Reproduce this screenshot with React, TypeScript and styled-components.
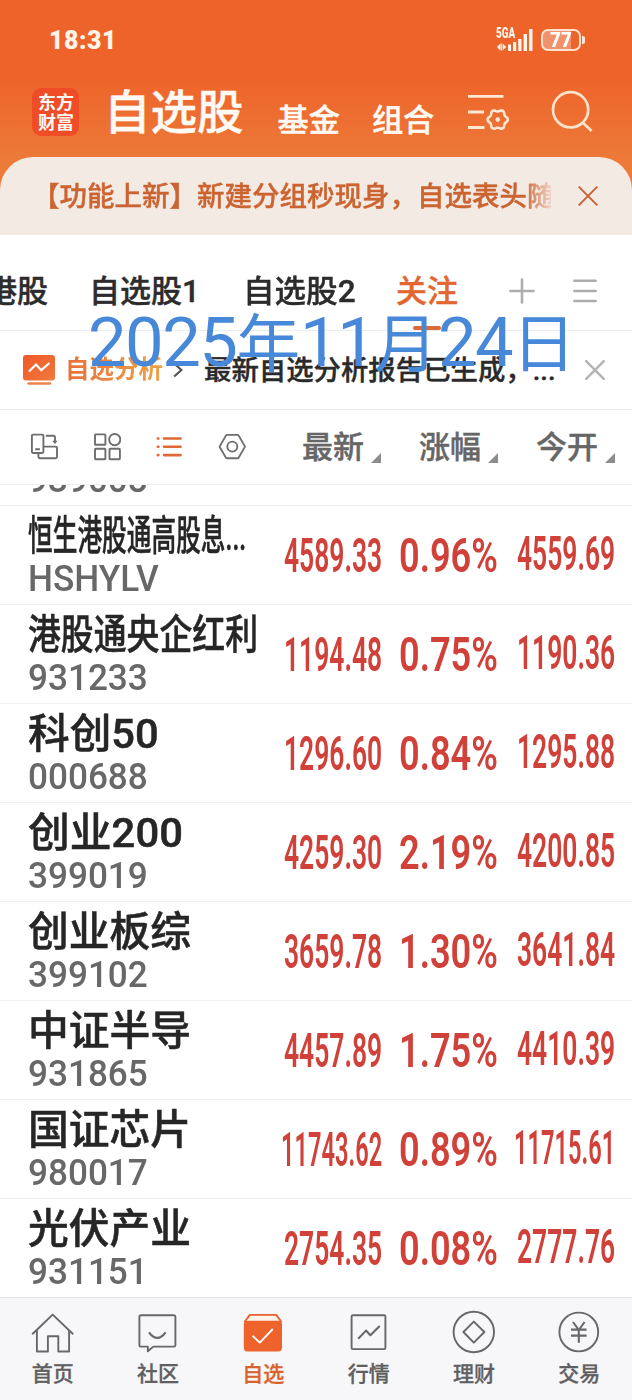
import React, { useLayoutEffect, useRef, useState } from "react";
import styled, { createGlobalStyle, css } from "styled-components";

const GlobalStyle = createGlobalStyle`
  *, *::before, *::after { box-sizing: border-box; }
  body {
    margin: 0;
    background: #fff;
    font-family: Roboto, "Noto Sans CJK SC", sans-serif;
    color: #2a2a2a;
  }
  svg { display: block; flex: none; }
`;

/* ---------- text that is squeezed or stretched to a fixed width ---------- */

const FitBox = styled.span<{ $width: number }>`
  display: block;
  flex: none;
  width: ${(p) => p.$width}px;
  white-space: nowrap;
`;
const FitInner = styled.span`
  display: inline-block;
  transform-origin: 0 50%;
`;

function Fit({ width, children }: { width: number; children: React.ReactNode }) {
  const ref = useRef<HTMLSpanElement>(null);
  const [scale, setScale] = useState(1);
  useLayoutEffect(() => {
    if (ref.current && ref.current.offsetWidth) setScale(width / ref.current.offsetWidth);
  }, [width, children]);
  return (
    <FitBox $width={width}>
      <FitInner ref={ref} style={{ transform: `scaleX(${scale})` }}>
        {children}
      </FitInner>
    </FitBox>
  );
}

/* semi-bold look for the CJK glyphs, which come only in medium and bold */
const semibold = css`
  font-weight: 500;
  -webkit-text-stroke: 0.4px currentColor;
`;

/* ---------- page ---------- */

const Screen = styled.main`
  position: relative;
  display: flex;
  flex-direction: column;
  width: 632px;
  height: 1400px;
  overflow: hidden;
  background: #fff;
`;

const Hero = styled.header`
  height: 235px;
  flex: none;
  display: flex;
  flex-direction: column;
  background: linear-gradient(#ee632a 0, #ee632a 76px, #ec7a38 160px, #ec7a38 100%);
`;

const StatusBar = styled.div`
  height: 78px;
  display: flex;
  align-items: center;
  justify-content: space-between;
  padding: 2px 46px 0 49px;
  color: #fff4ea;
`;
const Clock = styled.div`
  font-size: 25px;
  font-weight: 900;
  letter-spacing: 0.5px;
`;
const StatusIcons = styled.div`
  display: flex;
  align-items: center;
  gap: 8px;
`;
const Network = styled.div`
  position: relative;
  width: 37px;
  height: 24px;
`;
const NetworkLabel = styled.span`
  position: absolute;
  left: 0;
  top: -1px;
  font-size: 14px;
  line-height: 13px;
  font-weight: 900;
`;
const Battery = styled.div`
  position: relative;
  width: 40px;
  height: 22px;
  border: 2px solid #ffe3d0;
  border-radius: 7px;
  background: linear-gradient(90deg, #f1926c 0 28px, transparent 28px);
  color: #fff;
  font-size: 20.5px;
  line-height: 19px;
  font-weight: 900;
  padding-left: 7px;
  margin-right: 5px;
  &::after {
    content: "";
    position: absolute;
    right: -6px;
    top: 5px;
    width: 3px;
    height: 8px;
    border-radius: 0 2px 2px 0;
    background: #ffe3d0;
  }
`;

const TitleBar = styled.div`
  height: 79px;
  flex: none;
  display: flex;
  align-items: flex-start;
  padding-left: 32px;
  color: #fffaf4;
`;
const Logo = styled.div`
  width: 47px;
  height: 48px;
  margin: 10px 25px 0 0;
  padding: 5px 0 0 6px;
  border-radius: 9px;
  background: #ee4d28;
  font-size: 18px;
  line-height: 19.5px;
  font-weight: 700;
`;
const Title = styled.div`
  margin: 6.5px 34px 0 0;
  font-size: 46.5px;
  line-height: 56px;
  ${semibold}
`;
const TitleLink = styled.div`
  margin: 22.5px 32px 0 0;
  font-size: 31.2px;
  line-height: 40px;
  ${semibold}
`;
const TitleIcon = styled.div<{ $left?: number; $top: number }>`
  margin: ${(p) => p.$top}px 0 0 ${(p) => p.$left ?? 0}px;
`;

const Notice = styled.div`
  height: 78px;
  flex: none;
  display: flex;
  align-items: center;
  padding: 0 34px 0 32px;
  border-radius: 33px 33px 0 0;
  background: #f4eae4;
  color: #cb6431;
`;
const NoticeText = styled.div`
  width: 519px;
  padding-top: 2px;
  overflow: hidden;
  white-space: nowrap;
  font-size: 27.5px;
  line-height: 40px;
  ${semibold}
  mask-image: linear-gradient(90deg, #000 492px, transparent 524px);
`;
const NoticeClose = styled.div`
  margin-left: auto;
`;

/* ---------- tabs ---------- */

const Tabs = styled.nav`
  height: 96px;
  flex: none;
  display: flex;
  align-items: center;
  padding-top: 17px;
  border-bottom: 1px solid #ececec;
  overflow: hidden;
`;
const Tab = styled.div<{ $gap: number; $active?: boolean }>`
  position: relative;
  flex: none;
  margin-right: ${(p) => p.$gap}px;
  padding-top: 2px;
  font-size: 31px;
  line-height: 76px;
  ${semibold}
  color: ${(p) => (p.$active ? "#e2662f" : "#2c2c2c")};
  &:first-child { margin-left: -14px; }
  ${(p) =>
    p.$active &&
    css`
      &::after {
        content: "";
        position: absolute;
        left: 17px;
        bottom: 0;
        width: 28px;
        height: 4px;
        border-radius: 2px;
        background: #dc6a38;
      }
    `}
`;

/* ---------- report line ---------- */

const Report = styled.section`
  height: 79px;
  flex: none;
  display: flex;
  align-items: center;
  padding-left: 23px;
  border-bottom: 1px solid #e9e9e9;
`;
const ReportTitle = styled.div`
  margin: 0 10px 0 10px;
  font-size: 24.5px;
  line-height: 36px;
  font-weight: 700;
  background: linear-gradient(90deg, #e8703a, #f0a044);
  background-clip: text;
  color: transparent;
`;
const ReportText = styled.div`
  width: 381px;
  margin-left: 21px;
  padding-top: 2px;
  font-size: 27.4px;
  line-height: 40px;
  ${semibold}
  white-space: nowrap;
`;

const Watermark = styled.div`
  position: absolute;
  z-index: 2;
  left: 88px;
  top: 303px;
  color: #4788d9;
  font-size: 68px;
  line-height: 80px;
  font-weight: 400;
  letter-spacing: -1.5px;
`;
const WatermarkUnit = styled.span`
  font-size: 63px;
  letter-spacing: 0;
  line-height: 1;
`;

/* ---------- quotes ---------- */

const ColumnBar = styled.div`
  height: 75px;
  flex: none;
  display: flex;
  align-items: center;
  padding-left: 30px;
  border-bottom: 1px solid #efefef;
`;
const Tools = styled.div`
  flex: none;
  display: flex;
  gap: 34.5px;
  width: 272px;
`;
const Column = styled.div`
  position: relative;
  flex: none;
  width: 117px;
  padding-top: 2px;
  font-size: 31px;
  line-height: 40px;
  ${semibold}
  color: #666;
  &:last-child { width: 85px; }
  &::after {
    content: "";
    position: absolute;
    left: 69px;
    top: 27px;
    border-style: solid;
    border-width: 0 0 10px 10px;
    border-color: transparent transparent #8c8c8c transparent;
  }
`;

const QuoteList = styled.div`
  flex: 1;
  min-height: 0;
  overflow: hidden;
  display: flex;
  flex-direction: column;
  justify-content: flex-end;
`;
const Row = styled.div`
  height: 99px;
  flex: none;
  display: flex;
  padding: 7px 0 0 28px;
  border-bottom: 1px solid #f0f0f0;
  &:last-child { height: 98px; border-bottom: 0; }
`;
const Identity = styled.div`
  width: 233px;
`;
const Name = styled.div`
  font-size: 41px;
  line-height: 46px;
  font-weight: 500;
  -webkit-text-stroke: 0.5px currentColor;
  color: #262626;
`;
const Code = styled.div`
  margin-top: 2px;
  font-size: 36px;
  line-height: 36px;
  font-weight: 500;
  color: #686868;
`;
const Value = styled.div<{ $width: number; $raised?: boolean }>`
  width: ${(p) => p.$width}px;
  display: flex;
  justify-content: flex-end;
  padding-top: ${(p) => (p.$raised ? 13 : 15)}px;
  font-size: 47.5px;
  line-height: 56px;
  font-weight: 600;
  color: #d0413a;
`;

/* ---------- bottom navigation ---------- */

const BottomNav = styled.nav`
  height: 103px;
  flex: none;
  display: grid;
  grid-template-columns: repeat(6, 1fr);
  border-top: 1px solid #e2e2e4;
  background: #f7f7fa;
`;
const NavItem = styled.div<{ $active?: boolean }>`
  display: flex;
  flex-direction: column;
  align-items: center;
  gap: 6px;
  padding-top: 12px;
  font-size: 21px;
  line-height: 28px;
  font-weight: 500;
  -webkit-text-stroke: 0.3px currentColor;
  color: ${(p) => (p.$active ? "#d8632f" : "#606060")};
`;

/* ---------- icons ---------- */

const Cross = ({ size, color, w }: { size: number; color: string; w: number }) => (
  <svg width={size} height={size} viewBox="0 0 20 20" fill="none" stroke={color} strokeWidth={w} strokeLinecap="round">
    <path d="M1.2 1.2 18.8 18.8M18.8 1.2 1.2 18.8" />
  </svg>
);

const SignalIcon = () => (
  <svg width="37" height="24" viewBox="0 0 37 24" fill="currentColor">
    <path d="M1 19 4 15.8V22.2zM4.4 15.5h1.4v7H4.4zM6.6 15.5 10.2 19 6.6 22.5z" />
    <rect x="12" y="16.5" width="3" height="6.5" />
    <rect x="17" y="14" width="3.2" height="9" />
    <rect x="22.2" y="11" width="3.3" height="12" />
    <rect x="27.6" y="6" width="3.4" height="17" />
    <rect x="33" y="1" width="3.5" height="22" />
  </svg>
);

/* six-lobed cog outline around (cx, cy) */
const cogPath = (cx: number, cy: number, r: number, wave: number) =>
  Array.from({ length: 72 }, (_, i) => {
    const a = (i * Math.PI) / 36;
    const d = r + wave * Math.cos(6 * a);
    return `${i ? "L" : "M"}${(cx + d * Math.cos(a)).toFixed(2)} ${(cy + d * Math.sin(a)).toFixed(2)}`;
  }).join("") + "Z";

const ListSettingsIcon = () => (
  <svg width="43" height="40" viewBox="0 0 43 40" fill="none" stroke="#ffe8d3" strokeWidth="2.8">
    <path d="M1 4.3H36.5M1 20H17M1 35.5H17.5" />
    <path strokeWidth="2.6" strokeLinejoin="round" d={cogPath(30.7, 27.6, 9.1, 1)} />
    <circle cx="30.7" cy="27.6" r="2.3" fill="#ffe8d3" stroke="none" />
  </svg>
);

const SearchIcon = () => (
  <svg width="44" height="44" viewBox="0 0 44 44" fill="none" stroke="#ffe3ca" strokeWidth="2.7">
    <circle cx="20.6" cy="19.8" r="17.6" />
    <path d="M32.4 32.2 41.6 41" />
  </svg>
);

const ReportIcon = () => (
  <svg width="32" height="31" viewBox="0 0 32 31">
    <defs>
      <linearGradient id="report" x1="0" y1="0" x2="1" y2="1">
        <stop offset="0" stopColor="#f1582a" />
        <stop offset="1" stopColor="#f07a3c" />
      </linearGradient>
    </defs>
    <rect x="0" y="0" width="32" height="25.5" rx="3" fill="url(#report)" />
    <path d="M6 16.5 13 9.5 18.2 15.2 26.5 8" fill="none" stroke="#fff" strokeWidth="2.2" />
    <path d="M5.5 28.5H27" stroke="#f0824e" strokeWidth="2.4" strokeLinecap="round" />
  </svg>
);

const tool = { width: 28, height: 28, viewBox: "0 0 28 28", fill: "none", stroke: "#6e6e6e", strokeWidth: 1.9 };

const RotateIcon = () => (
  <svg {...tool}>
    <rect x="1.9" y="1.6" width="11.5" height="18.4" rx="1.2" />
    <path d="M5.2 16.3H9.9M13.5 13.6H25.6Q27 13.6 27 15V23.8Q27 25.2 25.6 25.2H9.8Q8.4 25.2 8.4 23.8V20.4M15.8 2.8H23.4Q25 2.8 25 4.4V9" />
    <path d="M22.2 7.8H27.6L25 11z" fill="#6e6e6e" stroke="none" />
  </svg>
);
const GridIcon = () => (
  <svg {...tool}>
    <rect x="2" y="1.4" width="10.4" height="10.4" rx=".6" />
    <circle cx="21.7" cy="6.6" r="5.6" />
    <rect x="2" y="15.8" width="10.4" height="10.4" rx=".6" />
    <rect x="16.5" y="15.8" width="10.4" height="10.4" rx=".6" />
  </svg>
);
const ListIcon = () => (
  <svg {...tool} stroke="#df6a36" strokeWidth="2.6" strokeLinecap="round">
    <path d="M2.8 5.5H3.4M2.8 13.7H3.4M2.8 22.1H3.4M9 5.5H25.6M9 13.7H25.6M9 22.1H25.6" />
  </svg>
);
const HexIcon = () => (
  <svg {...tool} strokeLinejoin="round">
    <path d="M9 1.9H19.6Q20.3 1.9 20.7 2.6L26.6 12.9Q27 13.7 26.6 14.4L20.7 24.6Q20.3 25.3 19.6 25.3H9Q8.3 25.3 7.9 24.6L2 14.4Q1.6 13.7 2 12.9L7.9 2.6Q8.3 1.9 9 1.9z" />
    <circle cx="14.3" cy="13.6" r="5" />
  </svg>
);

const nav = {
  width: 44,
  height: 44,
  viewBox: "0 0 44 44",
  fill: "none",
  stroke: "#686868",
  strokeWidth: 1.9,
  strokeLinejoin: "round" as const,
};

const navItems = [
  {
    label: "首页",
    icon: (
      <svg {...nav}>
        <path d="M1.2 24.3 21.7 4.6 42.2 24.3M5.9 20.3V41.5H16.9V26.2H27.3V41.5H38.1V20.3" />
      </svg>
    ),
  },
  {
    label: "社区",
    icon: (
      <svg {...nav}>
        <path d="M5 5.2H38Q39.4 5.2 39.4 6.8V35Q39.4 36.6 38 36.6H17.3L11.8 41.3V36.6H5Q3.4 36.6 3.4 35V6.8Q3.4 5.2 5 5.2z" />
        <path d="M13 22.3Q21.3 33.5 29.6 22.3" strokeWidth="2.2" />
      </svg>
    ),
  },
  {
    label: "自选",
    active: true,
    icon: (
      <svg {...nav}>
        <path d="M3.5 12 8.8 4.9H35.2L40.5 12" fill="#fff3ea" stroke="#e8622d" />
        <rect x="2.8" y="10.8" width="38.2" height="30.6" rx="3.6" fill="#ee622b" stroke="none" />
        <path d="M11.5 25.8 18.8 32.6 31.8 19" stroke="#fff" />
      </svg>
    ),
  },
  {
    label: "行情",
    icon: (
      <svg {...nav}>
        <rect x="4.6" y="5.3" width="33.8" height="33.8" rx="1.2" />
        <path d="M11.2 28.8 19 20.6 23.4 25.2 32.7 16" strokeWidth="2.1" />
      </svg>
    ),
  },
  {
    label: "理财",
    icon: (
      <svg {...nav}>
        <circle cx="21.8" cy="22" r="20.2" />
        <path d="M21.8 11.6 32.4 22 21.8 32.6 11.4 22z" />
      </svg>
    ),
  },
  {
    label: "交易",
    icon: (
      <svg {...nav}>
        <circle cx="21.8" cy="22" r="19.4" />
        <path d="M16 12 21.8 20 27.6 12M14 19.6H29.6M14 25.6H29.6M21.8 19.6V32.8" strokeWidth="2.1" />
      </svg>
    ),
  },
];

/* ---------- data ---------- */

type Quote = { name: string; nameWidth: number; code: string; values?: [string, string, string] };

const quotes: Quote[] = [
  { name: "", nameWidth: 0, code: "939008" },
  { name: "恒生港股通高股息...", nameWidth: 218, code: "HSHYLV", values: ["4589.33", "0.96%", "4559.69"] },
  { name: "港股通央企红利", nameWidth: 230, code: "931233", values: ["1194.48", "0.75%", "1190.36"] },
  { name: "科创50", nameWidth: 131, code: "000688", values: ["1296.60", "0.84%", "1295.88"] },
  { name: "创业200", nameWidth: 155, code: "399019", values: ["4259.30", "2.19%", "4200.85"] },
  { name: "创业板综", nameWidth: 163, code: "399102", values: ["3659.78", "1.30%", "3641.84"] },
  { name: "中证半导", nameWidth: 163, code: "931865", values: ["4457.89", "1.75%", "4410.39"] },
  { name: "国证芯片", nameWidth: 163, code: "980017", values: ["11743.62", "0.89%", "11715.61"] },
  { name: "光伏产业", nameWidth: 163, code: "931151", values: ["2754.35", "0.08%", "2777.76"] },
];

const priceWidth = (v: string) => (v.length > 7 ? 101 : 98);

export default function App() {
  return (
    <Screen>
      <GlobalStyle />
      <Hero>
        <StatusBar>
          <Clock>
            <Fit width={68}>18:31</Fit>
          </Clock>
          <StatusIcons>
            <Network>
              <NetworkLabel>
                <Fit width={19}>5GA</Fit>
              </NetworkLabel>
              <SignalIcon />
            </Network>
            <Battery>
              <Fit width={22}>77</Fit>
            </Battery>
          </StatusIcons>
        </StatusBar>
        <TitleBar>
          <Logo>
            东方
            <br />
            财富
          </Logo>
          <Title>自选股</Title>
          <TitleLink>基金</TitleLink>
          <TitleLink>组合</TitleLink>
          <TitleIcon $top={14} $left={1}>
            <ListSettingsIcon />
          </TitleIcon>
          <TitleIcon $top={12} $left={40}>
            <SearchIcon />
          </TitleIcon>
        </TitleBar>
        <Notice>
          <NoticeText>【功能上新】新建分组秒现身，自选表头随</NoticeText>
          <NoticeClose>
            <Cross size={20} color="#c9602f" w={1.9} />
          </NoticeClose>
        </Notice>
      </Hero>

      <Tabs>
        <Tab $gap={41}>港股</Tab>
        <Tab $gap={43}>
          <Fit width={111}>自选股1</Fit>
        </Tab>
        <Tab $gap={40}>
          <Fit width={113}>自选股2</Fit>
        </Tab>
        <Tab $gap={50.5} $active>
          关注
        </Tab>
        <svg width="26" height="26" viewBox="0 0 26 26" stroke="#adadad" strokeWidth="2.6" strokeLinecap="round">
          <path d="M13 1.5V24.5M1.5 13H24.5" />
        </svg>
        <svg width="62" height="26" viewBox="0 0 62 26" stroke="#adadad" strokeWidth="2.6" strokeLinecap="round">
          <path d="M39.4 2.8H60.6M39.4 13H60.6M39.4 23H60.6" />
        </svg>
      </Tabs>

      <Report>
        <ReportIcon />
        <ReportTitle>自选分析</ReportTitle>
        <svg width="10" height="16" viewBox="0 0 10 16" fill="none" stroke="#555" strokeWidth="2.2">
          <path d="M1.2 1.5 8.4 8 1.2 14.5" />
        </svg>
        <ReportText>最新自选分析报告已生成，...</ReportText>
        <Cross size={20} color="#b4b4b4" w={2.5} />
      </Report>

      <Watermark>
        <Fit width={488}>
          2025<WatermarkUnit>年</WatermarkUnit>11<WatermarkUnit>月</WatermarkUnit>24<WatermarkUnit>日</WatermarkUnit>
        </Fit>
      </Watermark>

      <ColumnBar>
        <Tools>
          <RotateIcon />
          <GridIcon />
          <ListIcon />
          <HexIcon />
        </Tools>
        <Column>最新</Column>
        <Column>涨幅</Column>
        <Column>今开</Column>
      </ColumnBar>

      <QuoteList>
        {quotes.map((q) => (
          <Row key={q.code}>
            <Identity>
              <Name>{q.name ? <Fit width={q.nameWidth}>{q.name}</Fit> : "\u00a0"}</Name>
              <Code>
                <Fit width={q.code === "HSHYLV" ? 131 : 120}>{q.code}</Fit>
              </Code>
            </Identity>
            {q.values && (
              <>
                <Value $width={121}>
                  <Fit width={priceWidth(q.values[0])}>{q.values[0]}</Fit>
                </Value>
                <Value $width={116}>
                  <Fit width={99}>{q.values[1]}</Fit>
                </Value>
                <Value $width={117} $raised>
                  <Fit width={priceWidth(q.values[2])}>{q.values[2]}</Fit>
                </Value>
              </>
            )}
          </Row>
        ))}
      </QuoteList>

      <BottomNav>
        {navItems.map((item) => (
          <NavItem key={item.label} $active={item.active}>
            {item.icon}
            {item.label}
          </NavItem>
        ))}
      </BottomNav>
    </Screen>
  );
}
